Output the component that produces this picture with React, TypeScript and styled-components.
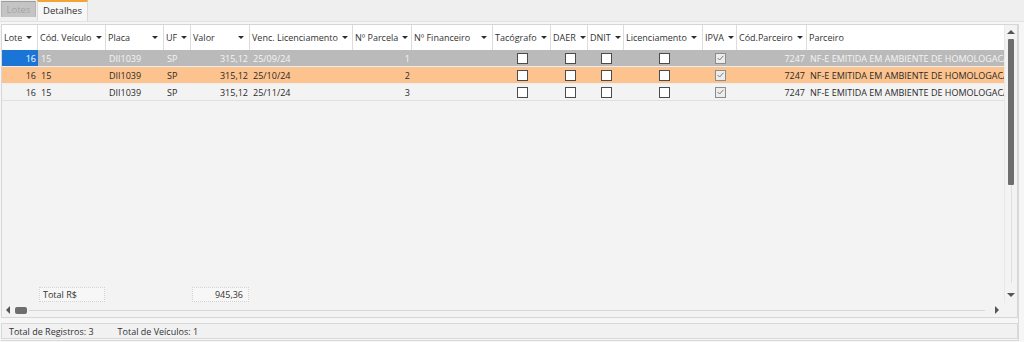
import React from 'react';
import styled, { createGlobalStyle } from 'styled-components';

const GlobalStyle = createGlobalStyle`
  html, body {
    margin: 0;
    padding: 0;
    background: #efefef;
  }
  body {
    font-family: "Open Sans", "Liberation Sans", sans-serif;
    font-size: 9px;
    color: #333;
  }
`;

const Screen = styled.div`
  width: 1024px;
  height: 342px;
  display: flex;
  flex-direction: column;
  background: #efefef;
  overflow: hidden;
`;

const TabBar = styled.div`
  height: 22px;
  display: flex;
  align-items: flex-start;
  padding-left: 1px;
  gap: 1px;
`;

const Tab = styled.div<{ $active?: boolean }>`
  display: flex;
  align-items: center;
  justify-content: center;
  box-sizing: border-box;
  height: ${p => (p.$active ? '21px' : '16px')};
  margin-top: ${p => (p.$active ? '0' : '1px')};
  width: ${p => (p.$active ? '51px' : '35px')};
  background: ${p => (p.$active ? '#f7f7f7' : '#c4c4c4')};
  color: ${p => (p.$active ? '#333' : '#a4a4a4')};
  border-top: ${p => (p.$active ? '2px solid #f2a536' : '1px solid #9c9c9c')};
  border-left: 1px solid ${p => (p.$active ? '#dadada' : '#b4b4b4')};
  border-right: 1px solid ${p => (p.$active ? '#dadada' : '#b4b4b4')};
  font-size: 9.5px;
  padding-bottom: ${p => (p.$active ? '3px' : '0')};
`;

const Panel = styled.div`
  flex: 1;
  display: flex;
  flex-direction: column;
  padding: 2px 5px 3px 1px;
  background: #f6f6f6;
  border-top: 1px solid #e2e2e2;
`;

const Frame = styled.div`
  flex: 1;
  display: flex;
  flex-direction: column;
  border-right: 1px solid #d9d9d9;
  border-bottom: 1px solid #d9d9d9;
  padding-bottom: 1px;
`;

const GridFrame = styled.div`
  height: 292px;
  display: flex;
  flex-direction: column;
  border: 1px solid #d6d6d6;
  background: #f3f3f3;
`;

const GridUpper = styled.div`
  flex: 1;
  display: flex;
  min-height: 0;
`;

const GridMain = styled.div`
  flex: 1;
  display: flex;
  flex-direction: column;
  overflow: hidden;
`;

const HeaderRow = styled.div`
  display: flex;
  height: 25px;
  background: #ffffff;
  flex-shrink: 0;
`;

const HeaderCell = styled.div<{ $w: number }>`
  width: ${p => p.$w}px;
  flex-shrink: 0;
  box-sizing: border-box;
  display: flex;
  align-items: center;
  justify-content: space-between;
  padding: 0 5px 0 2px;
  border-right: 1px solid #dcdcdc;
  white-space: nowrap;
  overflow: hidden;
  color: #333;
  &:last-child {
    flex: 1;
    border-right: none;
  }
`;

const SortArrow = styled.span`
  width: 0;
  height: 0;
  border-left: 3px solid transparent;
  border-right: 3px solid transparent;
  border-top: 3px solid #2d2d2d;
  margin-left: 4px;
  flex-shrink: 0;
`;

type RowKind = 'selected' | 'hover' | 'plain';

const rowBg: Record<RowKind, string> = {
  selected: '#bababa',
  hover: '#fdc38e',
  plain: '#f3f3f3',
};

const Row = styled.div<{ $kind: RowKind }>`
  display: flex;
  height: 16px;
  border-bottom: 1px solid ${p => (p.$kind === 'plain' ? '#e0e0e0' : '#eeeeee')};
  background: ${p => rowBg[p.$kind]};
  color: ${p => (p.$kind === 'selected' ? '#f4f4f4' : '#2a2a2a')};
  flex-shrink: 0;
`;

const Cell = styled.div<{ $w: number; $align: 'left' | 'right' | 'center'; $focus?: boolean }>`
  width: ${p => p.$w}px;
  flex-shrink: 0;
  box-sizing: border-box;
  display: flex;
  align-items: center;
  justify-content: ${p =>
    p.$align === 'right' ? 'flex-end' : p.$align === 'center' ? 'center' : 'flex-start'};
  padding: 0 2px 0 3px;
  white-space: nowrap;
  overflow: hidden;
  background: ${p => (p.$focus ? '#1a75d6' : 'transparent')};
  color: ${p => (p.$focus ? '#ffffff' : 'inherit')};
  &:last-child {
    flex: 1;
  }
`;

const Check = styled.span<{ $checked?: boolean }>`
  width: 9px;
  height: 9px;
  border: 1px solid ${p => (p.$checked ? '#8c8c8c' : '#4b4b4b')};
  background: ${p => (p.$checked ? '#ededed' : '#ffffff')};
  display: flex;
  align-items: center;
  justify-content: center;
  svg {
    display: block;
  }
`;

const Spacer = styled.div`
  flex: 1;
`;

const FooterRow = styled.div`
  display: flex;
  height: 15px;
  margin-bottom: 1px;
  flex-shrink: 0;
`;

const FooterSlot = styled.div<{ $w: number }>`
  width: ${p => p.$w}px;
  flex-shrink: 0;
  box-sizing: border-box;
  padding: 0 1px;
  display: flex;
`;

const FooterBox = styled.div<{ $align: 'left' | 'right' }>`
  flex: 1;
  display: flex;
  align-items: center;
  justify-content: ${p => (p.$align === 'right' ? 'flex-end' : 'flex-start')};
  padding: 0 5px 0 3px;
  border: 1px dotted #d2d2d2;
  background: #f7f7f7;
  color: #333;
  white-space: nowrap;
`;

const VScroll = styled.div`
  width: 13px;
  flex-shrink: 0;
  display: flex;
  flex-direction: column;
  align-items: center;
  padding: 5px 0 6px;
  box-sizing: border-box;
  border-left: 1px solid #e8e8e8;
`;

const ArrowUp = styled.span`
  width: 0;
  height: 0;
  border-left: 4px solid transparent;
  border-right: 4px solid transparent;
  border-bottom: 4px solid #555;
`;

const ArrowDown = styled.span`
  width: 0;
  height: 0;
  border-left: 4px solid transparent;
  border-right: 4px solid transparent;
  border-top: 4px solid #555;
`;

const VThumb = styled.div`
  width: 6px;
  height: 146px;
  margin-top: 5px;
  border-radius: 1px;
  background: #6e6e6e;
`;

const VTrack = styled.div`
  flex: 1;
  width: 1px;
  margin: 0 0 10px;
  background: #dedede;
`;

const HScroll = styled.div`
  height: 14px;
  display: flex;
  align-items: center;
  padding: 0 0 0 4px;
  flex-shrink: 0;
`;

const ArrowLeft = styled.span`
  width: 0;
  height: 0;
  border-top: 4px solid transparent;
  border-bottom: 4px solid transparent;
  border-right: 4px solid #555;
`;

const ArrowRight = styled.span`
  width: 0;
  height: 0;
  border-top: 4px solid transparent;
  border-bottom: 4px solid transparent;
  border-left: 4px solid #555;
`;

const HThumb = styled.div`
  width: 12px;
  height: 7px;
  margin-left: 5px;
  border-radius: 2px;
  background: #6e6e6e;
`;

const HTrack = styled.div`
  flex: 1;
  height: 1px;
  margin: 0 10px 0 2px;
  background: #d8d8d8;
`;

const Corner = styled.div`
  width: 18px;
  flex-shrink: 0;
`;

const StatusBar = styled.div`
  margin-top: 5px;
  height: 14px;
  display: flex;
  align-items: center;
  gap: 24px;
  padding-left: 7px;
  border: 1px solid #d8d8d8;
  background: #f1f1f1;
  color: #333;
`;

type Col = {
  title: string;
  w: number;
  align: 'left' | 'right' | 'center';
  key: string;
  check?: boolean;
  arrow?: boolean;
};

const columns: Col[] = [
  { title: 'Lote', w: 36, align: 'right', key: 'lote', arrow: true },
  { title: 'Cód. Veículo', w: 68, align: 'left', key: 'cod', arrow: true },
  { title: 'Placa', w: 58, align: 'left', key: 'placa', arrow: true },
  { title: 'UF', w: 27, align: 'left', key: 'uf', arrow: true },
  { title: 'Valor', w: 59, align: 'right', key: 'valor', arrow: true },
  { title: 'Venc. Licenciamento', w: 103, align: 'left', key: 'venc', arrow: true },
  { title: 'Nº Parcela', w: 59, align: 'right', key: 'parcela', arrow: true },
  { title: 'Nº Financeiro', w: 81, align: 'left', key: 'fin', arrow: true },
  { title: 'Tacógrafo', w: 58, align: 'center', key: 'taco', check: true, arrow: true },
  { title: 'DAER', w: 37, align: 'center', key: 'daer', check: true, arrow: true },
  { title: 'DNIT', w: 36, align: 'center', key: 'dnit', check: true, arrow: true },
  { title: 'Licenciamento', w: 79, align: 'center', key: 'lic', check: true, arrow: true },
  { title: 'IPVA', w: 34, align: 'center', key: 'ipva', check: true, arrow: true },
  { title: 'Cód.Parceiro', w: 70, align: 'right', key: 'codp', arrow: true },
  { title: 'Parceiro', w: 198, align: 'left', key: 'parceiro' },
];

type RowData = Record<string, string | boolean>;

const base = {
  lote: '16',
  cod: '15',
  placa: 'DII1039',
  uf: 'SP',
  valor: '315,12',
  fin: '',
  taco: false,
  daer: false,
  dnit: false,
  lic: false,
  ipva: true,
  codp: '7247',
  parceiro: 'NF-E EMITIDA EM AMBIENTE DE HOMOLOGACAO - SEM VALOR FISCAL',
};

const rows: { kind: RowKind; data: RowData }[] = [
  { kind: 'selected', data: { ...base, venc: '25/09/24', parcela: '1' } },
  { kind: 'hover', data: { ...base, venc: '25/10/24', parcela: '2' } },
  { kind: 'plain', data: { ...base, venc: '25/11/24', parcela: '3' } },
];

const CheckMark = () => (
  <svg width="7" height="6" viewBox="0 0 7 6">
    <path d="M0.6 3 L2.6 5 L6.4 0.8" fill="none" stroke="#7a7a7a" strokeWidth="1" />
  </svg>
);

export default function App() {
  return (
    <>
      <GlobalStyle />
      <Screen>
        <TabBar>
          <Tab>Lotes</Tab>
          <Tab $active>Detalhes</Tab>
        </TabBar>
        <Panel>
          <Frame>
            <GridFrame>
              <GridUpper>
                <GridMain>
                  <HeaderRow>
                    {columns.map(c => (
                      <HeaderCell key={c.key} $w={c.w}>
                        <span>{c.title}</span>
                        {c.arrow && <SortArrow />}
                      </HeaderCell>
                    ))}
                  </HeaderRow>
                  {rows.map((r, i) => (
                    <Row key={i} $kind={r.kind}>
                      {columns.map((c, ci) => {
                        const v = r.data[c.key];
                        return (
                          <Cell
                            key={c.key}
                            $w={c.w}
                            $align={c.align}
                            $focus={r.kind === 'selected' && ci === 0}
                          >
                            {c.check ? (
                              <Check $checked={v === true}>{v === true && <CheckMark />}</Check>
                            ) : (
                              v
                            )}
                          </Cell>
                        );
                      })}
                    </Row>
                  ))}
                  <Spacer />
                  <FooterRow>
                    <FooterSlot $w={36} />
                    <FooterSlot $w={68}>
                      <FooterBox $align="left">Total R$</FooterBox>
                    </FooterSlot>
                    <FooterSlot $w={58} />
                    <FooterSlot $w={27} />
                    <FooterSlot $w={59}>
                      <FooterBox $align="right">945,36</FooterBox>
                    </FooterSlot>
                  </FooterRow>
                </GridMain>
                <VScroll>
                  <ArrowUp />
                  <VThumb />
                  <VTrack />
                  <ArrowDown />
                </VScroll>
              </GridUpper>
              <HScroll>
                <ArrowLeft />
                <HThumb />
                <HTrack />
                <ArrowRight />
                <Corner />
              </HScroll>
            </GridFrame>
            <StatusBar>
              <span>Total de Registros: 3</span>
              <span>Total de Veículos: 1</span>
            </StatusBar>
          </Frame>
        </Panel>
      </Screen>
    </>
  );
}
